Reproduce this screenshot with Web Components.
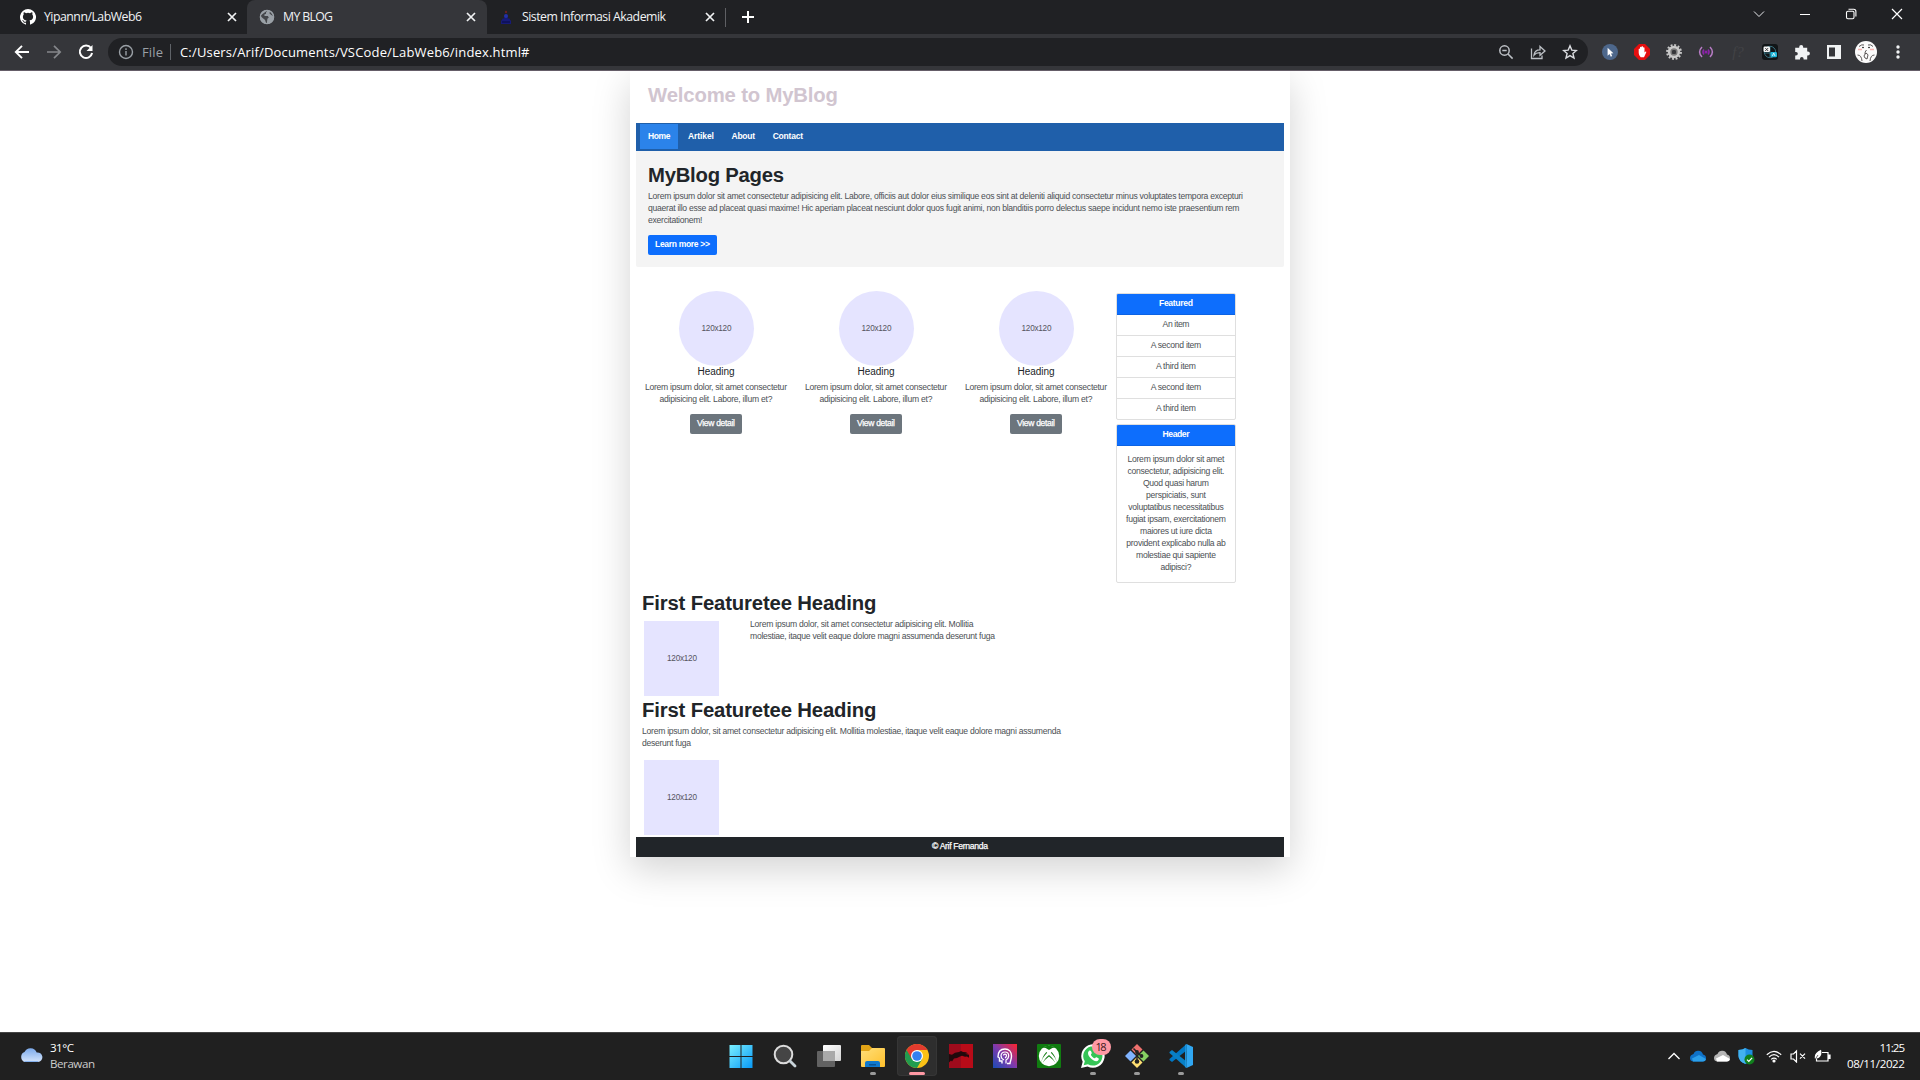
<!DOCTYPE html>
<html lang="id">
<head>
<meta charset="utf-8">
<title>MY BLOG</title>
<style>
html,body{margin:0;height:100%;overflow:hidden;background:#fff}
body{display:flex;flex-direction:column;height:1080px;font-family:"Liberation Sans",Arial,sans-serif}
</style>
</head>
<body>
<tab-strip></tab-strip>
<tool-bar></tool-bar>
<blog-page></blog-page>
<task-bar></task-bar>
<script>
const define = (name, html, after) => {
  const t = document.createElement('template');
  t.innerHTML = html;
  customElements.define(name, class extends HTMLElement {
    connectedCallback() {
      if (this.shadowRoot) return;
      this.attachShadow({mode: 'open'}).append(t.content.cloneNode(true));
      if (after) after(this, this.shadowRoot);
    }
  });
};

/* One line of text, tracked so that it fills the width given in "w" */
define('t-line', `<style>:host{display:block;width:max-content;white-space:pre}span{display:inline-block}</style><span><slot></slot></span>`, (el, root) => {
  const w = parseFloat(el.getAttribute('w'));
  const s = root.querySelector('span');
  const n = el.textContent.length;
  if (!w || n < 2) return;
  const ls = (w - s.getBoundingClientRect().width) / (n - 1);
  s.style.letterSpacing = ls.toFixed(4) + 'px';
  s.style.marginRight = (-ls).toFixed(4) + 'px';
});

/* ---------- page building blocks ---------- */
define('place-holder', `<style>
:host{display:flex;width:75px;height:75px;align-items:center;justify-content:center;background:#e5e4ff;color:#55545e;font-size:8.2px;line-height:12px}
:host([round]){border-radius:50%}
t-line{margin:1px 0 0 1px}
</style><t-line w="30">120x120</t-line>`);

define('push-button', `<style>
:host{display:flex;height:20px;box-sizing:border-box;padding-bottom:3px;align-items:center;justify-content:center;border-radius:2px;background:#0d6efd;color:#fff;font-size:8.5px;line-height:12px;font-weight:700}
:host([muted]){background:#6c757d;font-weight:400;-webkit-text-stroke:.25px #fff}
</style><slot></slot>`);

define('column-card', `<style>
:host{display:flex;flex-direction:column;align-items:center;width:160px;color:#4c5054;font-size:8.6px;line-height:12px}
.h{color:#212529;font-size:10px;line-height:11px;margin:0 0 4px}
push-button{width:52px;margin-top:9px}
</style><place-holder round></place-holder><t-line class="h" w="37">Heading</t-line>
<t-line w="142">Lorem ipsum dolor, sit amet consectetur</t-line><t-line w="113">adipisicing elit. Labore, illum et?</t-line>
<push-button muted><t-line w="38">View detail</t-line></push-button>`);

define('side-card', `<style>
:host{display:block;box-sizing:border-box;width:120px;border:1px solid #dfdfdf;border-radius:2px;overflow:hidden;color:#4c5054;font-size:8.6px;line-height:12px}
.head{display:flex;justify-content:center;height:21px;box-sizing:border-box;padding-top:3px;background:#0d6efd;border-bottom:1px solid #0c63e4;color:#fff;font-weight:700}
</style><div class="head"><slot name="head"></slot></div><slot></slot>`);

define('list-row', `<style>
:host{display:flex;justify-content:center;height:21px;box-sizing:border-box;padding-top:3px;border-bottom:1px solid #dfdfdf}
:host(:last-child){border:0;height:20px}
</style><slot></slot>`);

define('blog-page', `<style>
:host{flex:1;min-height:0;display:flex;justify-content:center;align-items:flex-start;background:#fff;overflow:hidden;color:#4c5054;font-size:8.6px;line-height:12px}
main{width:648px;height:786px;padding:0 6px;background:#fff;box-shadow:0 12px 36px rgba(0,0,0,.175);display:flex;flex-direction:column}
header{height:41px;padding:11px 0 0 12px;color:#d1c5d0}
.h1{font-size:20.3px;height:25px;line-height:25px;font-weight:700;padding-top:1px;box-sizing:border-box}
nav{height:28px;background:#1f5faa;display:flex;align-items:flex-start;gap:1.6px;padding:1px 4px 0;box-sizing:border-box;color:#fff;font-weight:700;font-size:8.5px}
nav div{height:25px;box-sizing:border-box;padding:6px 8px 0}
nav .on{background:#2b83ea;width:38px;margin-right:.4px}
.hero{height:116px;box-sizing:border-box;background:#f4f4f4;padding:11px 12px 0;border-radius:0 0 2px 2px}
.dark{color:#212529}
.hero .h1{margin-bottom:3px}
.hero push-button{width:69px;margin-top:9px}
.row{display:flex;height:299px;padding-top:24px}
aside{display:flex;flex-direction:column;gap:4px;padding-top:2px}
.txt{padding:7px 0 9px;display:flex;flex-direction:column;align-items:center}
.feat{padding-left:6px}
.media{display:flex;gap:31px;align-items:flex-start;height:82px}
.media place-holder{margin:6px 0 0 2px}
.media div{padding-top:3px}
footer{margin-top:2px;height:20px;background:#212529;color:#fff;display:flex;justify-content:center;padding-top:3px;box-sizing:border-box;font-weight:400;-webkit-text-stroke:.25px #fff}
</style>
<main>
<header><t-line class="h1" w="190">Welcome to MyBlog</t-line></header>
<nav><div class="on"><t-line w="22.5">Home</t-line></div><div><t-line w="26">Artikel</t-line></div><div><t-line w="23.5">About</t-line></div><div><t-line w="30.5">Contact</t-line></div></nav>
<section class="hero">
<t-line class="h1 dark" w="136">MyBlog Pages</t-line>
<t-line w="595">Lorem ipsum dolor sit amet consectetur adipisicing elit. Labore, officiis aut dolor eius similique eos sint at deleniti aliquid consectetur minus voluptates tempora excepturi</t-line>
<t-line w="591.5">quaerat illo esse ad placeat quasi maxime! Hic aperiam placeat nesciunt dolor quos fugit animi, non blanditiis porro delectus saepe incidunt nemo iste praesentium rem</t-line>
<t-line w="54.5">exercitationem!</t-line>
<push-button><t-line w="55">Learn more &gt;&gt;</t-line></push-button>
</section>
<section class="row">
<column-card></column-card><column-card></column-card><column-card></column-card>
<aside>
<side-card><t-line slot="head" w="34">Featured</t-line>
<list-row><t-line w="27">An item</t-line></list-row><list-row><t-line w="50.5">A second item</t-line></list-row><list-row><t-line w="40">A third item</t-line></list-row><list-row><t-line w="50.5">A second item</t-line></list-row><list-row><t-line w="40">A third item</t-line></list-row></side-card>
<side-card><t-line slot="head" w="27">Header</t-line>
<div id="q"></div></side-card>
</aside>
</section>
<section class="feat">
<t-line class="h1 dark" w="234.5">First Featuretee Heading</t-line>
<div class="media"><place-holder></place-holder><div><t-line w="223.5">Lorem ipsum dolor, sit amet consectetur adipisicing elit. Mollitia</t-line><t-line w="245">molestiae, itaque velit eaque dolore magni assumenda deserunt fuga</t-line></div></div>
<t-line class="h1 dark" w="234.5">First Featuretee Heading</t-line>
<t-line w="419" style="margin-top:3px">Lorem ipsum dolor, sit amet consectetur adipisicing elit. Mollitia molestiae, itaque velit eaque dolore magni assumenda</t-line>
<t-line w="49">deserunt fuga</t-line>
<place-holder style="margin:11px 0 0 2px"></place-holder>
</section>
<footer><t-line w="56">© Arif Fernanda</t-line></footer>
</main>`, (el, root) => {
  const q = root.querySelector('#q');
  q.className = 'txt';
  [['Lorem ipsum dolor sit amet', 97], ['consectetur, adipisicing elit.', 97], ['Quod quasi harum', 66], ['perspiciatis, sunt', 60], ['voluptatibus necessitatibus', 95.5], ['fugiat ipsam, exercitationem', 100], ['maiores ut iure dicta', 72], ['provident explicabo nulla ab', 99.5], ['molestiae qui sapiente', 80], ['adipisci?', 31]].forEach(([t, w]) => {
    const l = document.createElement('t-line');
    l.setAttribute('w', w); l.textContent = t; q.append(l);
  });
});

/* ---------- browser chrome ---------- */
define('tab-strip', `<style>
:host{display:flex;height:34px;flex:none;background:#202124;color:#f1f3f4;font:12.3px/18px "Open Sans","Noto Sans",sans-serif;align-items:stretch}
.tab{display:flex;align-items:center;box-sizing:border-box}
.tab t-line{margin-bottom:1px}
.on{background:#35363a;border-radius:8px 8px 0 0;width:240px;padding-left:12px}
.tab svg{flex:none}.tab svg+t-line{margin-left:8px}
.x{margin-left:auto;margin-right:10px}
.sep{width:1px;height:19px;background:#5f6064;align-self:center;margin-left:5px}
.ctl{margin-left:auto;display:flex;align-items:center}
.ctl svg{margin:0 15px 6px}
.ctl svg:last-child{margin-right:15px}
</style>
<div class="tab" style="width:247px;padding-left:20px"><svg width="16" height="16" viewBox="0 0 16 16"><path fill="#fff" d="M8 0a8 8 0 0 0-2.53 15.59c.4.07.55-.17.55-.38v-1.49c-2.23.49-2.7-.95-2.7-.95-.36-.92-.89-1.17-.89-1.17-.73-.5.06-.49.06-.49.8.06 1.23.83 1.23.83.71 1.22 1.87.87 2.33.66.07-.52.28-.87.5-1.07-1.77-.2-3.64-.89-3.64-3.95 0-.87.31-1.59.82-2.15-.08-.2-.36-1.02.08-2.12 0 0 .67-.21 2.2.82a7.6 7.6 0 0 1 4 0c1.53-1.04 2.2-.82 2.2-.82.44 1.1.16 1.92.08 2.12.51.56.82 1.27.82 2.15 0 3.07-1.87 3.75-3.65 3.95.29.25.54.73.54 1.48v2.2c0 .21.15.46.55.38A8 8 0 0 0 8 0z"/></svg><t-line w="98">Yipannn/LabWeb6</t-line><svg class="x" width="10" height="10"><path d="M1 1l8 8M9 1L1 9" stroke="#f1f3f4" stroke-width="1.7"/></svg></div>
<div class="tab on"><svg width="16" height="16" viewBox="0 0 16 16"><circle cx="8" cy="8" r="7" fill="#9aa0a6"/><path d="M8.600 1.300L7 3.400v1.400L4.800 6l1.400 1h2.600l1 1.400-1.400 1.400-.6 4.800c-1.300-.3-1-2.800-2-3.800L3 8.600 1.600 6.400M11 2.500l-.6 1.800 1.800 1.600 2.300 1.200" fill="#35363a" fill-opacity=".85"/><circle cx="8" cy="8" r="6.700" fill="none" stroke="#9aa0a6" stroke-width="1.200"/></svg><t-line w="50">MY BLOG</t-line><svg class="x" width="10" height="10" style="margin-right:11px"><path d="M1 1l8 8M9 1L1 9" stroke="#f1f3f4" stroke-width="1.7"/></svg></div>
<div class="tab" style="width:233px;padding-left:11px"><svg width="16" height="16" viewBox="0 0 16 16"><path d="M7 6h2l1 4 1-1 2 3v3H3v-3l2-3 1 1z" fill="#161a78"/><circle cx="8" cy="7" r="2" fill="#2330a8"/><path d="M4 13h8" stroke="#090b42"/><path d="M8 1.500l.8 1.500-.8 1.500-.8-1.500z" fill="#a3201f"/></svg><t-line w="144">Sistem Informasi Akademik</t-line><svg class="x" width="10" height="10" style="margin-right:5px"><path d="M1 1l8 8M9 1L1 9" stroke="#f1f3f4" stroke-width="1.7"/></svg></div>
<div class="sep"></div>
<svg width="14" height="14" style="align-self:center;margin-left:15px"><path d="M7 1v12M1 7h12" stroke="#fff" stroke-width="2"/></svg>
<div class="ctl"><svg width="16" height="16" viewBox="0 0 16 16" fill="none" stroke="#e8eaed"><path d="M3 5.500l5 5 5-5"/></svg><svg width="16" height="16"><path d="M3 8.500h10" stroke="#fff"/></svg><svg width="16" height="16" fill="none" stroke="#fff" stroke-width="1.1"><rect x="3.500" y="5.200" width="7.500" height="7.500" rx="1.400"/><path d="M5.500 3.200h5.200q2.200 0 2.200 2.200v5.200"/></svg><svg width="16" height="16"><path d="M3 3l10 10M13 3L3 13" stroke="#fff" stroke-width="1.200"/></svg></div>`);

define('tool-bar', `<style>
:host{display:flex;flex:none;height:37px;box-sizing:border-box;border-bottom:1px solid #655d68;background:#35363a;align-items:center;font:13px/18px "Open Sans","Noto Sans",sans-serif;color:#fff}
i{display:flex;width:32px;height:32px;align-items:center;justify-content:center;flex:none}
.left{display:flex;padding-left:6px;width:102px;box-sizing:border-box}
.pill{display:flex;align-items:center;width:1480px;height:28px;border-radius:14px;background:#202124;box-sizing:border-box;padding:0 2px 0 10px}
.bar{width:1px;height:16px;background:#5f6368;margin:0 9px 0 7px}
.r{margin-left:auto;display:flex}
.ext{display:flex;margin-left:6px}
</style>
<div class="left"><i><svg width="16" height="16" fill="none" stroke="#fff" stroke-width="1.900"><path d="M15 8H2M8 1.800L1.800 8 8 14.200"/></svg></i><i><svg width="16" height="16" fill="none" stroke="#85878b" stroke-width="1.700"><path d="M1 8h13M8 1.800L14.200 8 8 14.200"/></svg></i><i><svg width="16" height="16" fill="none"><path d="M13 4A6.200 6.200 0 1 0 14.100 9" stroke="#fff" stroke-width="2"/><path d="M14.500 1v6h-6z" fill="#fff"/></svg></i></div>
<div class="pill" style="margin-left:6px"><svg width="16" height="16" fill="none" stroke="#9aa0a6" stroke-width="1.400"><circle cx="8" cy="8" r="6.500"/><path d="M8 7v4.500M8 4.300v1.600"/></svg><t-line w="21" style="margin-left:8px;color:#9aa0a6">File</t-line><span class="bar"></span><t-line w="349.500">C:/Users/Arif/Documents/VSCode/LabWeb6/index.html#</t-line>
<div class="r"><i><svg width="16" height="16" fill="none" stroke="#bdc1c6" stroke-width="1.500"><circle cx="6.500" cy="6.500" r="4.700"/><path d="M10 10l4.600 4.600M4.300 6.500h4.400"/></svg></i><i><svg width="16" height="16" fill="none" stroke="#bdc1c6" stroke-width="1.300"><path d="M1.500 4.500v10H12v-3M4 11q.6-5.200 6-5.200V2.500L15 7l-5 4.300V8.600Q6 8.500 4 11z"/></svg></i><i><svg width="16" height="16" viewBox="0 0 16 16" fill="none" stroke="#dadce0" stroke-width="1.400"><path d="M8 1.800l1.800 4.300 4.600.4-3.500 3 1.100 4.600L8 11.600l-4 2.500 1.100-4.600-3.500-3 4.600-.4z"/></svg></i></div></div>
<div class="ext">
<i><svg width="16" height="16"><circle cx="8" cy="8" r="8" fill="#4d678b"/><path d="M5.600 3.700v8l1.900-1.600 1.300 2.600 1.400-.7-1.200-2.500 2.400-.3z" fill="#fff"/></svg></i>
<i><svg width="16" height="16"><path d="M5 0h6l5 5v6l-5 5H5l-5-5V5z" fill="#e50f0f"/><path d="M4.700 9V5q.7-.8 1.300 0V3.300q.7-.9 1.500 0v-.7q.8-.8 1.500 0v1q.9-.7 1.500.2v4.700l1-1q1.200-.1.700 1L10 13.200H6.700Q4.700 11.500 4.700 9z" fill="#fff"/></svg></i>
<i><svg width="16" height="16" fill="none"><circle cx="8" cy="8" r="4.400" stroke="#c9c9c9" stroke-width="3.600"/><circle cx="8" cy="8" r="6.800" stroke="#c6c6c6" stroke-width="2.300" stroke-dasharray="1.900 1.660"/><circle cx="8" cy="8" r="3" stroke="#777" stroke-width="1.300"/></svg></i>
<i><svg width="16" height="16" fill="none" stroke="#b77cc4" stroke-width="1.500"><path d="M4 3Q-.8 8 4 13M12 3q4.800 5 0 10"/><path d="M6 5.500Q3.800 8 6 10.500M10 5.500q2.200 2.500 0 5" stroke="#8d24aa"/><circle cx="8" cy="8" r="1.600" fill="#8b20aa" stroke="none"/></svg></i>
<i><t-line style="font:italic 15px/18px 'Liberation Serif',serif;color:#424346">f?</t-line></i>
<i><svg width="16" height="16"><rect width="16" height="16" rx="3" fill="#111517"/><circle cx="8" cy="8" r="5.700" fill="none" stroke="#38707f"/><path d="M3 9h10M8 3v10" stroke="#38707f"/><rect x="1.500" y="2.500" width="6.500" height="5.500" rx="1.200" fill="#f5f5f5"/><path d="M3.200 4l3 3M6.200 4l-3 3" stroke="#222" stroke-width=".8"/><rect x="8.500" y="8" width="6.500" height="5.200" rx="1.200" fill="#20b8db"/><path d="M10.400 12l1.300-3 1.300 3" stroke="#fff" stroke-width=".8" fill="none"/></svg></i>
<i><svg width="16" height="16" viewBox="0 0 16 16"><path fill="#f1f3f4" d="M1.200 3.800h4V3a2 2 0 0 1 4 0v.8h4v3.800h.7a2 2 0 0 1 0 4h-.7v4H9.600v-.9a1.800 1.800 0 0 0-3.600 0v.9H1.200v-4H2a1.800 1.800 0 0 0 0-3.600h-.8z"/></svg></i>
<i><svg width="16" height="16"><path fill="#f1f3f4" fill-rule="evenodd" d="M1 1h14v14H1zm2 2.500v9h6v-9z"/></svg></i>
<i><svg width="22" height="22"><circle cx="11" cy="11" r="11" fill="#fbfbfb"/><path d="M4 5.500q3-2.500 5-1.500M13 4q3-1 5 1.500M2.500 14q4 0 4.500 6M19.500 14q-4 0-4.500 6M11.500 9q-2 2-1.500 4M9 15q2-5 4-1l-1 4-2-1z" fill="none" stroke="#4a4545" stroke-width=".9"/><circle cx="8" cy="6.500" r=".8"/><circle cx="14" cy="6.500" r=".8"/><path d="M3 8.500h4M15 8.500h4" stroke="#f7b3af" stroke-width="1.500"/></svg></i>
<i><svg width="4" height="16" fill="#f1f3f4"><circle cx="2" cy="3" r="1.700"/><circle cx="2" cy="8" r="1.700"/><circle cx="2" cy="13" r="1.700"/></svg></i>
</div>`);

/* ---------- taskbar ---------- */
define('task-app', `<style>
:host{position:relative;display:flex;width:40px;height:40px;align-items:center;justify-content:center;box-sizing:border-box;border-radius:4px}
:host([active]){background:#2e2e2e;box-shadow:inset 0 0 0 1px #363636}
b{display:none;position:absolute;left:17px;bottom:1px;width:6px;height:3px;border-radius:2px;background:#9a9a9a}
:host([run]) b{display:block}
:host([active]) b{display:block;left:12px;width:16px;background:#ff99a4}
</style><slot></slot><b></b>`);

define('task-bar', `<style>
:host{display:flex;flex:none;height:48px;box-sizing:border-box;background:#202020;border-top:1px solid #454545;align-items:center;color:#fff;font:11.6px/16px "Open Sans","Noto Sans",sans-serif;padding-bottom:1px}
.w{display:flex;align-items:center;width:720.500px;padding-left:19px;box-sizing:border-box;gap:7px}
.w svg{margin-bottom:3px}
.apps{display:flex;gap:4px}
.tray{margin-left:auto;display:flex;align-items:center;padding-right:15px}
.tray i{width:24px;display:flex;justify-content:center}
.clock{display:flex;flex-direction:column;align-items:flex-end;width:71px}
.badge{position:absolute;left:19px;top:3px;width:19px;height:16px;border-radius:8px;background:#ff99a4;color:#3b1a1d;display:flex;justify-content:center;line-height:16px;font-size:11px}
</style>
<div class="w"><svg width="24" height="18" viewBox="0 0 24 18"><defs><linearGradient id="c" x2="0" y2="1"><stop stop-color="#7ba9ea"/><stop offset="1" stop-color="#d4e4fb"/></linearGradient></defs><path d="M6 16a5.300 5.300 0 0 1-.5-10A6.600 6.600 0 0 1 17.700 6.500 4.800 4.800 0 1 1 19 16z" fill="url(#c)"/><path d="M5.500 15.500h13.700" stroke="#86b2ee"/></svg><div><t-line w="24">31°C</t-line><t-line w="45" style="color:#ccc">Berawan</t-line></div></div>
<div class="apps">
<task-app><svg width="24" height="24"><defs><linearGradient id="w" x2="1" y2="1"><stop stop-color="#7af0ff"/><stop offset="1" stop-color="#0898f5"/></linearGradient></defs><path fill="url(#w)" d="M.5 1h11v11H.5zM12.500 1h11v11h-11zM.5 13h11v11H.5zM12.500 13h11v11h-11z"/></svg></task-app>
<task-app><svg width="24" height="24" fill="none"><circle cx="10.500" cy="10.500" r="8.800" fill="#454545" stroke="#dcdcdc" stroke-width="2"/><path d="M17 17l5 5" stroke="#c9d4da" stroke-width="2.800" stroke-linecap="round"/></svg></task-app>
<task-app><svg width="24" height="24"><defs><linearGradient id="t" x2="1" y2="1"><stop stop-color="#fff"/><stop offset="1" stop-color="#d4d4d4"/></linearGradient></defs><rect y="7" width="18" height="16" rx="1" fill="#626262"/><rect x="6" y="1" width="18" height="16" rx="1" fill="url(#t)"/><path d="M6 7h12v10H6z" fill="#a9a9a9"/></svg></task-app>
<task-app run><svg width="24" height="24"><defs><linearGradient id="f" x2="1" y2="1"><stop stop-color="#ffdf7a"/><stop offset="1" stop-color="#ffc02b"/></linearGradient></defs><path d="M0 2q0-1 1-1h7l3 3v4H0z" fill="#e2a416"/><path d="M0 7h8l3-3h12q1 0 1 1v17q0 1-1 1H1q-1 0-1-1z" fill="url(#f)"/><path d="M4 23v-4q0-2 2-2h11q2 0 2 2v4z" fill="#0f79cf"/><path d="M8 20h7v1.500H8z" fill="#0b5596"/></svg></task-app>
<task-app active><svg width="24" height="24" viewBox="0 0 24 24"><circle cx="12" cy="12" r="12" fill="#fbc116"/><path d="M12 12L1.600 6A12 12 0 0 0 12 24l5.200-9z" fill="#229c4f"/><path d="M1.600 6a12 12 0 0 1 20.800 0H12l-5.200 9z" fill="#e33b2e"/><circle cx="12" cy="12" r="6" fill="#fff"/><circle cx="12" cy="12" r="4.800" fill="#3280ef"/></svg></task-app>
<task-app><svg width="24" height="24"><path d="M0 0h24v24H0z" fill="#b80b18"/><path d="M0 0h12v24H0z" fill="#8d0c20" opacity=".6"/><path d="M0 10l3 .8 3-2 4-.8 2-1 2 1 3 .2 2 1.300-3 .3 4 1v3l-2-1.300-2 .3-3-1-2 .8-3 1.500-3 .3-2 3-1-1-4 4z" fill="#21090c"/></svg></task-app>
<task-app><svg width="24" height="24" fill="none"><defs><linearGradient id="h" x1="0" y1="1" x2="1" y2="0"><stop stop-color="#1a4cb4"/><stop offset=".5" stop-color="#7f3aad"/><stop offset="1" stop-color="#ff232b"/></linearGradient></defs><path fill="url(#h)" d="M0 0h24v24H0z"/><path d="M9 19.500V17H6.500v-3L5 13C5 7.500 8 5 12 5s6.500 3 6.500 7-1.500 5-1.500 7.500h-3" stroke="#fff" stroke-width="1.400"/><path d="M11 16Q8 14.500 8 11.500 8.500 8 12 8t3.700 3.500q0 3-2.700 4.500v3.500M10.500 11.500q0-1.300 1.500-1.300t1.500 1.300q0 1.500-1.500 2.500" stroke="#fff" stroke-width="1.200"/></svg></task-app>
<task-app><svg width="24" height="24"><rect width="24" height="24" rx="1" fill="#107c10"/><circle cx="12" cy="12" r="10.200" fill="#fff"/><path d="M5.300 3.600Q8 3.300 12 6q4-2.700 6.700-2.400Q16 1.800 12 1.800T5.300 3.600zM9.300 8Q5 13 4.300 18.500l-.8 0L5.500 19.700Q7 15 12 11q5 4 6.500 8.700l2-1.200-.8 0Q19 13 14.700 8l-.9.800Q19 14 19.700 18.500l-.7 1.500Q17 16 12 12.500 7 16 5 20l-.7-1.500Q5 14 10.200 8.800z" fill="#107c10"/></svg></task-app>
<task-app run><svg width="24" height="24" viewBox="0 0 24 24"><path d="M0 24l1.700-6.300A11.700 11.700 0 1 1 6.500 22.400z" fill="#fff"/><path d="M2.700 21.300l1.100-4A9.600 9.600 0 1 1 7 20.300z" fill="#35c456"/><path d="M8.500 6.500C6 8 7 11.500 9.500 14s6.200 4.500 8 2c.8-1.500.4-1.700-2-2.700-1-.4-1 1-2 1-1.500-.5-3.300-2.300-3.600-3.500 0-.8 1.200-1 .8-2-.6-1.700-1-2.600-2.200-2.300z" fill="#fff"/></svg><span class="badge"><t-line w="11">18</t-line></span></task-app>
<task-app run><svg width="24" height="24"><path d="M12 0l5.500 5.500-5.500 5.500-5.500-5.500z" fill="#f0716e"/><path d="M5.500 6.500l5.500 5.500-5.500 5.500L0 12z" fill="#80b3ff"/><path d="M18.500 6.500L24 12l-5.500 5.500L13 12z" fill="#86d062"/><path d="M12 13l5.500 5.500L12 24l-5.500-5.500z" fill="#ffdf72"/><path d="M8.500 4.500L12 8v9M12 8l4 4" stroke="#222" stroke-width="1.500" fill="none"/><circle cx="12" cy="8" r="1.900" fill="#222"/><circle cx="12" cy="17.500" r="2.300" fill="#222"/><circle cx="16.500" cy="12" r="1.900" fill="#222"/></svg></task-app>
<task-app run><svg width="24" height="24"><path d="M17.500 0v6.500L3 18 .5 16V15z" fill="#0078c6"/><path d="M17.500 24v-6.500L3 6 .5 8v1z" fill="#087fc5"/><path d="M17.500 0L24 3v18l-6.500 3z" fill="#30a7f2"/><path d="M17.500 0v24l-1.500-1V1z" fill="#1b93dc"/></svg></task-app>
</div>
<div class="tray">
<i><svg width="14" height="14" fill="none" stroke="#fff" stroke-width="1.300"><path d="M1.500 10L7 4.500 12.500 10"/></svg></i>
<i><svg width="16" height="12"><path d="M3 11.500Q0 11 0 8t3.500-4Q5 .5 8.500.8 12 1 13 4.500q3 .5 3 3.500t-3 3.500z" fill="#0f72c8"/><path d="M3 11.500l-1-3L9 5l7 4q-.5 2.500-3 2.500z" fill="#2b9fea"/></svg></i>
<i><svg width="16" height="12"><path d="M3 11.500Q0 11 0 8t3.500-4Q5 .5 8.500.8 12 1 13 4.500q3 .5 3 3.500t-3 3.500z" fill="#b5b5b5"/><path d="M3 11.500l-1-3L9 5l7 4q-.5 2.500-3 2.500z" fill="#fff"/></svg></i>
<i><svg width="17" height="17"><path d="M7.500 0q3 2 7 2v6q0 5-7 8Q.5 13 .5 8V2q4 0 7-2z" fill="#1d8fe0"/><path d="M7.500 0v16Q.5 13 .5 8V2q4 0 7-2z" fill="#43b2ef"/><circle cx="11.500" cy="11.500" r="5" fill="#10801c"/><path d="M9 11.600l1.800 1.800 3.300-3.500" fill="none" stroke="#fff" stroke-width="1.300"/></svg></i>
<i style="margin-left:4px"><svg width="16" height="14" fill="none" stroke="#fff" stroke-width="1.200"><path d="M.8 5.800q7.200-7 14.400 0M3 8.200q5-5 10 0M5.200 10.400q2.800-2.600 5.600 0"/><circle cx="8" cy="12" r="1" fill="#fff"/></svg></i>
<i><svg width="16" height="14" fill="none" stroke="#fff" stroke-width="1.200"><path d="M1 5h2.500l3-3v11l-3-3H1zM10 4.700l5 5M15 4.700l-5 5"/></svg></i>
<i><svg width="17" height="14" fill="none" stroke="#fff" stroke-width="1.200"><path d="M8 3.500h6V12H2.500V9.500M15 6v3.500h1V6z"/><path d="M1 10Q-.5 4 7 .8 8.500 7 4.500 9q-2 .5-3.500 1z" fill="#fff" stroke="none"/><path d="M0 12l4-6" stroke="#222" stroke-width=".7"/></svg></i>
<div class="clock"><t-line w="25.500">11:25</t-line><t-line w="58">08/11/2022</t-line></div>
</div>`);
</script>
</body>
</html>
